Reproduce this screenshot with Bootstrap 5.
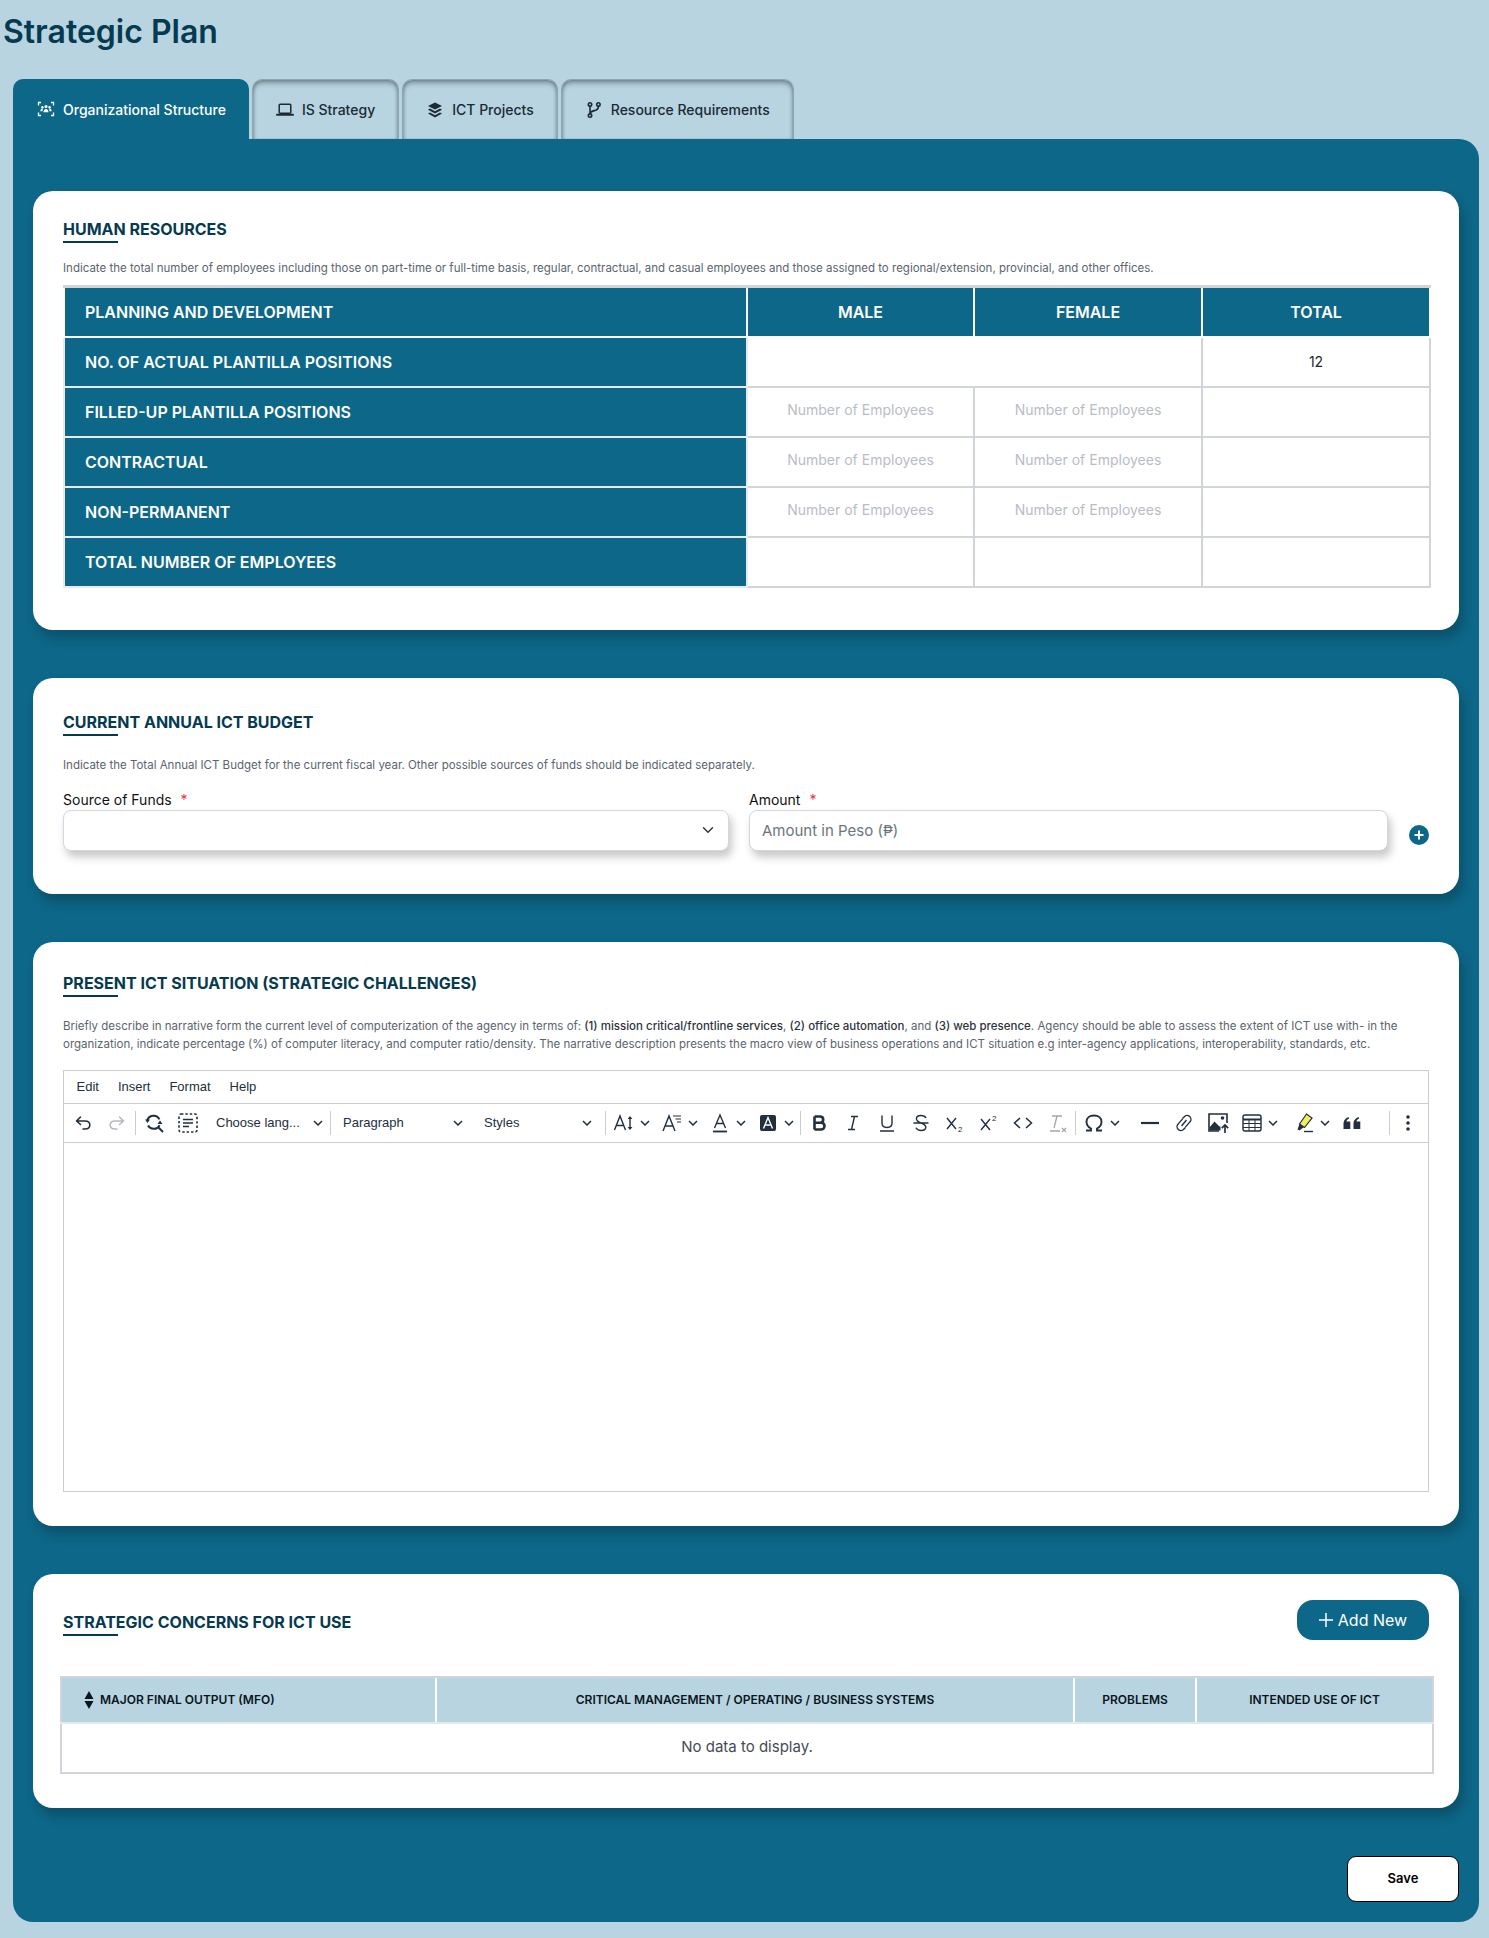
<!DOCTYPE html>
<html lang="en">
<head>
<meta charset="UTF-8">
<title>Strategic Plan</title>
<link href="https://cdn.jsdelivr.net/npm/bootstrap@5.3.0/dist/css/bootstrap.min.css" rel="stylesheet">
<style>
    body { background: #b7d4e0; font-family: Inter, "Liberation Sans", sans-serif; padding: 0 10px 19px 13px; color: #1d2733; }
    .page-title { font-size: 32px; line-height: 38px; font-weight: 600; color: #053a50; margin: 13px 0 28px -10px; }

    .plan-tabs { border-bottom: 0; gap: 3px; }
    .plan-tabs .nav-link { height: 60px; margin: 0; padding: 0 23px; display: flex; align-items: center; gap: 8px; font-size: 14px; font-weight: 500; color: #1b2a35; background: #b7d4e0; border: 1px solid #8fa5b0; border-bottom: 0; border-radius: 10px 10px 0 0; box-shadow: inset 0 4px 5px -1px rgba(40,50,60,.45), inset 2px 0 3px -1px rgba(40,50,60,.25), inset -2px 0 3px -1px rgba(40,50,60,.25); }
    .plan-tabs .nav-link.active { color: #fff; background: #0d6788; border: 0; box-shadow: none; padding: 0 23px 0 24px; }
    .tab-ico { width: 18px; height: 18px; flex-shrink: 0; }

    .plan-panel { background: #0d6788; border-radius: 0 20px 20px 20px; padding: 52px 20px 20px; }
    .plan-card { background: #fff; border-radius: 20px; padding: 28px 30px 42px; box-shadow: 4px 8px 12px rgba(0,0,0,.22); margin-bottom: 48px; }
    .sec-title { font-size: 16px; line-height: 20px; font-weight: 700; color: #053a50; margin: 0; }
    .sec-title::after { content: ""; display: block; width: 55px; height: 2px; margin-top: 2px; background: #053a50; }
    .sec-desc { font-size: 11.5px; line-height: 18px; color: #5b6470; margin: 16px 0 8px; }
    .sec-desc b { font-weight: 500; color: #2c3440; }

    .hr-table { table-layout: fixed; margin: 0; border: 2px solid #d2d4dc; border-top-width: 3px; }
    .hr-table td, .hr-table th { height: 50px; padding: 0; border: 2px solid #d2d4dc; vertical-align: middle; font-size: 16px; font-weight: 600; text-align: center; }
    .hr-table th { background: #0d6788; color: #fff; border-color: #e8eaee; }
    .hr-table thead th { border-color: #fff; }
    .hr-table th.row-head { text-align: left; padding-left: 20px; }
    .hr-table td { font-size: 14px; font-weight: 400; color: #1d2733; }
    .count-input { border: 0; background: transparent; box-shadow: none; text-align: center; font-size: 14px; padding: 0 4px 4px; }
    .count-input::placeholder { color: #b9bcc7; }

    .field-label { font-size: 14px; line-height: 20px; color: #111; margin: 0; display: block; }
    .field-label i { color: #e5343d; font-style: normal; margin-left: 5px; }
    .shadow-field { height: 41px; border: 1px solid #d4d6e0; border-radius: 8px; box-shadow: 3px 6px 8px rgba(0,0,0,.22); font-size: 15px; padding-left: 12px; }
    .shadow-field::placeholder { color: #6c757d; }
    .add-round { width: 20px; height: 20px; margin: 0 0 0 21px; padding: 0; border: 0; background: none; flex-shrink: 0; display: block; }

    .rich-editor { border: 1px solid #ccc; font-family: "Liberation Sans", Arial, sans-serif; font-size: 13px; color: #222f3e; }
    .ed-menu { height: 33px; padding-left: 3px; border-bottom: 1px solid #ccc; display: flex; align-items: center; }
    .ed-menu span { padding: 0 9.5px; }
    .ed-tools { height: 39px; padding-left: 2px; padding-right: 3px; border-bottom: 1px solid #ccc; display: flex; align-items: center; }
    .ed-tools > * { flex-shrink: 0; }
    .ed-btn { width: 34px; height: 26px; display: flex; align-items: center; justify-content: center; }
    .ed-btn svg { width: 24px; height: 24px; }
    .ed-chev { width: 14px; margin: 0 3px 0 -3px; display: flex; justify-content: center; }
    .ed-chev svg { width: 10px; height: 6px; }
    .ed-sep { width: 1px; height: 24px; background: #ccc; margin: 0 1px; }
    .ed-select { height: 26px; padding: 0 6px 0 11px; display: flex; align-items: center; justify-content: space-between; }
    .sel-lang { width: 124px; }
    .sel-para { width: 137px; margin-right: 4px; }
    .sel-style { width: 125px; margin-right: 6px; }
    .ed-body { height: 348px; }

    .add-new { background: #0d6788; color: #fff; border-radius: 16px; height: 40px; width: 132px; font-size: 16px; padding: 0; display: flex; align-items: center; justify-content: center; gap: 5px; }
    .add-new:hover { background: #0d6788; color: #fff; }
    .mfo-wrap { margin: 36px -3px 0; }
    .mfo-table { table-layout: fixed; margin: 0; border: 2px solid #d2d4dc; border-top: 0; }
    .mfo-table th { height: 46px; padding: 0; background: #b7d4e0; border: 0; border-top: 2px solid #d2d4dc; border-left: 2px solid #fff; border-bottom: 2px solid #e6e8ec; font-size: 12px; font-weight: 600; color: #0b1520; text-align: center; vertical-align: middle; }
    .mfo-table th:first-child { text-align: left; padding-left: 22px; border-left: 0; }
    .sort-ico { width: 10px; height: 18px; margin-right: 6px; vertical-align: -5px; }
    .mfo-table td { height: 50px; padding: 0; border: 0; text-align: center; vertical-align: middle; font-size: 15px; color: #444c56; }

    .save-btn { width: 112px; height: 46px; padding: 0; background: #fff; border: 1px solid #000; border-radius: 9px; font-size: 13px; font-weight: 600; color: #000; }
    .save-btn:hover { background: #fff; color: #000; }
</style>
</head>
<body>
    <h1 class="page-title">Strategic Plan</h1>

    <ul class="nav nav-tabs plan-tabs">
        <li class="nav-item">
            <a class="nav-link active" href="#">
                <svg class="tab-ico" viewBox="0 0 18 18" fill="none" stroke="currentColor" stroke-width="1.3"><path d="M4 2.5H1.5v3M14 2.5h2.5v3M4 15.5H1.5v-3M14 15.5h2.5v-3"/><g fill="currentColor" stroke="none"><circle cx="9" cy="6.6" r="1.5"/><circle cx="5.4" cy="7.2" r="1.2"/><circle cx="12.6" cy="7.2" r="1.2"/><path d="M6.5 12.2c0-2 1-3.3 2.5-3.3s2.5 1.3 2.5 3.3zM3.4 11.2c0-1.5.8-2.6 2-2.6.3 0 .5 0 .7.1-.4.6-.6 1.5-.6 2.5zM14.6 11.2c0-1.5-.8-2.6-2-2.6-.3 0-.5 0-.7.1.4.6.6 1.5.6 2.5z"/></g></svg>
                Organizational Structure
            </a>
        </li>
        <li class="nav-item">
            <a class="nav-link" href="#">
                <svg class="tab-ico" viewBox="0 0 18 18" fill="none" stroke="currentColor"><rect x="3.2" y="3.2" width="11.6" height="9" rx="1" stroke-width="1.5"/><path d="M1 13.8h16" stroke-width="2" stroke-linecap="round"/></svg>
                IS Strategy
            </a>
        </li>
        <li class="nav-item">
            <a class="nav-link" href="#">
                <svg class="tab-ico" viewBox="0 0 18 18" fill="currentColor"><path d="M9 1.5 16 5 9 8.5 2 5z"/><path d="M4 7.6 2 8.8l7 3.6 7-3.6-2-1.2-5 2.6z"/><path d="M4 11.4l-2 1.2 7 3.9 7-3.9-2-1.2-5 2.8z"/></svg>
                ICT Projects
            </a>
        </li>
        <li class="nav-item">
            <a class="nav-link" href="#">
                <svg class="tab-ico" viewBox="0 0 18 18" fill="none" stroke="currentColor" stroke-width="1.6"><circle cx="5" cy="3.4" r="1.7"/><circle cx="5" cy="14.6" r="1.7"/><circle cx="13.4" cy="3.4" r="1.7"/><path d="M5 5.2v7.6M13.4 5.2c0 3.2-2 4-4 4.4-2 .4-4 .8-4 3"/></svg>
                Resource Requirements
            </a>
        </li>
    </ul>

    <div class="plan-panel">
        <section class="plan-card">
            <h2 class="sec-title">HUMAN RESOURCES</h2>
            <p class="sec-desc">Indicate the total number of employees including those on part-time or full-time basis, regular, contractual, and casual employees and those assigned to regional/extension, provincial, and other offices.</p>
            <table class="table hr-table">
                <colgroup><col style="width:683px"><col style="width:227px"><col style="width:228px"><col style="width:228px"></colgroup>
                <thead>
                    <tr><th class="row-head">PLANNING AND DEVELOPMENT</th><th>MALE</th><th>FEMALE</th><th>TOTAL</th></tr>
                </thead>
                <tbody>
                    <tr><th class="row-head">NO. OF ACTUAL PLANTILLA POSITIONS</th><td colspan="2"></td><td>12</td></tr>
                    <tr><th class="row-head">FILLED-UP PLANTILLA POSITIONS</th><td><input class="form-control count-input" placeholder="Number of Employees"></td><td><input class="form-control count-input" placeholder="Number of Employees"></td><td></td></tr>
                    <tr><th class="row-head">CONTRACTUAL</th><td><input class="form-control count-input" placeholder="Number of Employees"></td><td><input class="form-control count-input" placeholder="Number of Employees"></td><td></td></tr>
                    <tr><th class="row-head">NON-PERMANENT</th><td><input class="form-control count-input" placeholder="Number of Employees"></td><td><input class="form-control count-input" placeholder="Number of Employees"></td><td></td></tr>
                    <tr><th class="row-head">TOTAL NUMBER OF EMPLOYEES</th><td></td><td></td><td></td></tr>
                </tbody>
            </table>
        </section>

        <section class="plan-card budget-card">
            <h2 class="sec-title">CURRENT ANNUAL ICT BUDGET</h2>
            <p class="sec-desc">Indicate the Total Annual ICT Budget for the current fiscal year. Other possible sources of funds should be indicated separately.</p>
            <div class="d-flex align-items-end budget-row">
                <div class="source-col">
                    <label class="field-label">Source of Funds <i>*</i></label>
                    <select class="form-select shadow-field"><option></option></select>
                </div>
                <div class="amount-col">
                    <label class="field-label">Amount <i>*</i></label>
                    <input class="form-control shadow-field" placeholder="Amount in Peso (₱)">
                </div>
                <button class="add-round" type="button" aria-label="Add source">
                    <svg viewBox="0 0 20 20" width="20" height="20"><circle cx="10" cy="10" r="10" fill="#0d6788"/><path d="M10 5.5v9M5.5 10h9" stroke="#fff" stroke-width="2"/></svg>
                </button>
            </div>
        </section>

        <section class="plan-card situation-card">
            <h2 class="sec-title">PRESENT ICT SITUATION (STRATEGIC CHALLENGES)</h2>
            <p class="sec-desc">Briefly describe in narrative form the current level of computerization of the agency in terms of: <b>(1) mission critical/frontline services</b>, <b>(2) office automation</b>, and <b>(3) web presence</b>. Agency should be able to assess the extent of ICT use with- in the organization, indicate percentage (%) of computer literacy, and computer ratio/density. The narrative description presents the macro view of business operations and ICT situation e.g inter-agency applications, interoperability, standards, etc.</p>
            <div class="rich-editor">
                <div class="ed-menu"><span>Edit</span><span>Insert</span><span>Format</span><span>Help</span></div>
                <div class="ed-tools">
                    <span class="ed-btn"><svg viewBox="0 0 24 24" fill="none" stroke="#222f3e" stroke-width="1.6" stroke-linecap="round" stroke-linejoin="round"><path d="M9.5 6 5.5 10l4 3.5M5.8 10H14c3 0 4.8 1.7 4.8 4s-1.8 4-4.8 4h-2"/></svg></span>
                    <span class="ed-btn"><svg viewBox="0 0 24 24" fill="none" stroke="#b5b9bf" stroke-width="1.6" stroke-linecap="round" stroke-linejoin="round"><path d="m14.5 6 4 4-4 3.5M18.2 10H10c-3 0-4.8 1.7-4.8 4s1.8 4 4.8 4h2"/></svg></span>
                    <span class="ed-sep"></span>
                    <span class="ed-btn"><svg viewBox="0 0 24 24" fill="none" stroke="#222f3e" stroke-width="2"><path d="M17.4 8.4A6.6 6.6 0 0 0 5.2 9.6M6 14.6a6.6 6.6 0 0 0 11.6-.4M16 16l5 5"/><path d="M3 8.4h5L5.5 12zM20.5 13h-5L18 9.4z" fill="#222f3e" stroke="none"/></svg></span>
                    <span class="ed-btn"><svg viewBox="0 0 24 24" fill="none" stroke="#222f3e"><rect x="3" y="3" width="18" height="18" rx="2" stroke-width="1.6" stroke-dasharray="2.4 2"/><path d="M7 8.5h10M7 12h10M7 15.5h6" stroke-width="1.5"/></svg></span>
                    <span class="ed-select sel-lang">Choose lang...<svg width="10" height="6" viewBox="0 0 10 6" fill="none" stroke="#222f3e" stroke-width="1.5"><path d="m1 1 4 4 4-4"/></svg></span>
                    <span class="ed-sep"></span>
                    <span class="ed-select sel-para">Paragraph<svg width="10" height="6" viewBox="0 0 10 6" fill="none" stroke="#222f3e" stroke-width="1.5"><path d="m1 1 4 4 4-4"/></svg></span>
                    <span class="ed-select sel-style">Styles<svg width="10" height="6" viewBox="0 0 10 6" fill="none" stroke="#222f3e" stroke-width="1.5"><path d="m1 1 4 4 4-4"/></svg></span>
                    <span class="ed-sep"></span>
                    <span class="ed-btn"><svg viewBox="0 0 24 24" fill="none" stroke="#222f3e"><path d="m2.5 19 5.5-14 5.5 14M4.5 14.5h7" stroke-width="1.4"/><path d="M18 6v12" stroke-width="1.4"/><path d="m15.6 8 2.4-3 2.4 3zM15.6 16l2.4 3 2.4-3z" fill="#222f3e" stroke="none"/></svg></span>
                    <span class="ed-chev"><svg viewBox="0 0 10 6" fill="none" stroke="#222f3e" stroke-width="1.5"><path d="m1 1 4 4 4-4"/></svg></span>
                    <span class="ed-btn"><svg viewBox="0 0 24 24" fill="none" stroke="#222f3e" stroke-width="1.4"><path d="m3 20 6-15 6 15M5 15h8"/><path d="M13 5h8M15.5 8h5.5M17 11h4" stroke-width="1.2"/></svg></span>
                    <span class="ed-chev"><svg viewBox="0 0 10 6" fill="none" stroke="#222f3e" stroke-width="1.5"><path d="m1 1 4 4 4-4"/></svg></span>
                    <span class="ed-btn"><svg viewBox="0 0 24 24" fill="none" stroke="#222f3e" stroke-width="1.4"><path d="m6.5 17 5.5-13 5.5 13M8.5 12.5h7"/><path d="M5 20.5h14" stroke-width="1.8"/></svg></span>
                    <span class="ed-chev"><svg viewBox="0 0 10 6" fill="none" stroke="#222f3e" stroke-width="1.5"><path d="m1 1 4 4 4-4"/></svg></span>
                    <span class="ed-btn"><svg viewBox="0 0 24 24"><rect x="4" y="4" width="16" height="16" rx="2" fill="#222f3e"/><path d="m7.5 17.5 4.5-11 4.5 11M9 14h6" fill="none" stroke="#fff" stroke-width="1.4"/></svg></span>
                    <span class="ed-chev"><svg viewBox="0 0 10 6" fill="none" stroke="#222f3e" stroke-width="1.5"><path d="m1 1 4 4 4-4"/></svg></span>
                    <span class="ed-sep"></span>
                    <span class="ed-btn"><svg viewBox="0 0 24 24" fill="none" stroke="#222f3e" stroke-width="2.6"><path d="M7.5 5.5v13M7.5 5.5H13c2 0 3.2 1.3 3.2 3s-1.2 3.2-3.2 3.2H7.5M7.5 11.7H14c2 0 3.5 1.3 3.5 3.3s-1.5 3.5-3.5 3.5H7.5"/></svg></span>
                    <span class="ed-btn"><svg viewBox="0 0 24 24" fill="none" stroke="#222f3e" stroke-width="1.4"><path d="M10 5.5h7M7 18.5h7M13.5 5.5l-3 13"/></svg></span>
                    <span class="ed-btn"><svg viewBox="0 0 24 24" fill="none" stroke="#222f3e" stroke-width="1.4"><path d="M7 4.5v7.5c0 3 2 4.5 5 4.5s5-1.5 5-4.5V4.5M5 20h14"/></svg></span>
                    <span class="ed-btn"><svg viewBox="0 0 24 24" fill="none" stroke="#222f3e" stroke-width="1.4"><path d="M17 7c-.8-1.6-2.6-2.5-5-2.5-2.8 0-4.6 1.3-4.6 3.3 0 2 1.6 3 4.6 4.2 3 1.2 4.8 2 4.8 4 0 2-2 3.5-4.8 3.5-2.4 0-4.2-1-5-2.7M4.5 12h15"/></svg></span>
                    <span class="ed-btn"><svg viewBox="0 0 24 24" fill="none" stroke="#222f3e" stroke-width="1.4"><path d="m4 7 9 11M13 7l-9 11"/><text x="15" y="21" font-size="8" fill="#222f3e" stroke="none">2</text></svg></span>
                    <span class="ed-btn"><svg viewBox="0 0 24 24" fill="none" stroke="#222f3e" stroke-width="1.4"><path d="m4 8 9 11M13 8l-9 11"/><text x="15" y="10" font-size="8" fill="#222f3e" stroke="none">2</text></svg></span>
                    <span class="ed-btn"><svg viewBox="0 0 24 24" fill="none" stroke="#222f3e" stroke-width="1.5"><path d="m9 7-5.5 5L9 17M15 7l5.500 5L15 17"/></svg></span>
                    <span class="ed-btn"><svg viewBox="0 0 24 24" fill="none" stroke="#a3a8af" stroke-width="1.3"><path d="M7 5h10M12 5 9 17M5 20h10M17 17l4 4M21 17l-4 4"/></svg></span>
                    <span class="ed-sep"></span>
                    <span class="ed-btn"><svg viewBox="0 0 24 24" fill="none" stroke="#222f3e" stroke-width="1.9"><path d="M4 19.500h5v-2c-3-1.500-4.500-4-4.500-6.800C4.500 7 7.500 4.500 12 4.500s7.500 2.500 7.500 6.200c0 2.800-1.500 5.300-4.500 6.800v2h5"/></svg></span>
                    <span class="ed-chev"><svg viewBox="0 0 10 6" fill="none" stroke="#222f3e" stroke-width="1.5"><path d="m1 1 4 4 4-4"/></svg></span>
                    <span class="ed-btn ms-2"><svg viewBox="0 0 24 24"><path d="M3 12h18" stroke="#222f3e" stroke-width="2.2"/></svg></span>
                    <span class="ed-btn"><svg viewBox="0 0 24 24" fill="none" stroke="#222f3e" stroke-width="1.4"><path d="m10.500 7.500 1.800-1.800a3.700 3.700 0 0 1 5.600 5.200l-4.500 5.200M13.500 16.500l-1.800 1.800a3.700 3.700 0 0 1-5.600-5.200l4.500-5.200"/><path d="m9.500 15 5-6"/></svg></span>
                    <span class="ed-btn"><svg viewBox="0 0 24 24" fill="none"><path d="M21 12V3H3v17h10" stroke="#222f3e" stroke-width="1.6"/><circle cx="16.500" cy="7" r="1.800" fill="#222f3e"/><path d="M3.500 19.500v-3l5-6 5 5h1v4z" fill="#222f3e"/><path d="M19 22v-8M15.800 17.200 19 14l3.200 3.200" stroke="#222f3e" stroke-width="1.700"/></svg></span>
                    <span class="ed-btn"><svg viewBox="0 0 24 24" fill="none" stroke="#222f3e"><rect x="3" y="4" width="18" height="16" rx="2" stroke-width="1.400"/><path d="M3 8.500h18" stroke-width="2"/><path d="M3 12.500h18M3 16.500h18M9 8v12M15 8v12" stroke-width="1"/></svg></span>
                    <span class="ed-chev"><svg viewBox="0 0 10 6" fill="none" stroke="#222f3e" stroke-width="1.5"><path d="m1 1 4 4 4-4"/></svg></span>
                    <span class="ed-btn ms-1"><svg viewBox="0 0 24 24"><path d="M14.500 3 20 7l-7.500 9.500-5-3.500z" fill="#f5ee5c" stroke="#222f3e" stroke-width="1.200"/><path d="m7.500 13-2 5.500 2 1 4.500-3.500z" fill="#222f3e"/><path d="M12 20.500h9" stroke="#222f3e" stroke-width="1.400"/></svg></span>
                    <span class="ed-chev"><svg viewBox="0 0 10 6" fill="none" stroke="#222f3e" stroke-width="1.5"><path d="m1 1 4 4 4-4"/></svg></span>
                    <span class="ed-btn"><svg viewBox="0 0 24 24" fill="#222f3e"><path d="M3.500 18v-5.500c0-3 1.500-5 5-6.500l.7 1.600c-1.600.8-2.500 1.700-2.700 3h3.800V18zM13.500 18v-5.500c0-3 1.500-5 5-6.500l.7 1.600c-1.600.8-2.500 1.700-2.700 3h3.800V18z"/></svg></span>
                    <span class="ms-auto d-flex align-items-center">
                        <span class="ed-sep"></span>
                        <span class="ed-btn"><svg viewBox="0 0 24 24" fill="#222f3e"><circle cx="12" cy="6" r="1.800"/><circle cx="12" cy="12" r="1.800"/><circle cx="12" cy="18" r="1.800"/></svg></span>
                    </span>
                </div>
                <div class="ed-body"></div>
            </div>
        </section>

        <section class="plan-card concerns-card">
            <div class="d-flex justify-content-between align-items-start">
                <h2 class="sec-title concerns-title">STRATEGIC CONCERNS FOR ICT USE</h2>
                <button class="btn add-new" type="button">
                    <svg width="14" height="14" viewBox="0 0 14 14"><path d="M7 0v14M0 7h14" stroke="#fff" stroke-width="1.500"/></svg>
                    Add New
                </button>
            </div>
            <div class="mfo-wrap">
                <table class="table mfo-table">
                    <colgroup><col style="width:375px"><col style="width:638px"><col style="width:122px"><col style="width:237px"></colgroup>
                    <thead>
                        <tr>
                            <th><svg class="sort-ico" viewBox="0 0 10 18" fill="#0b1520"><path d="M5 0l4.500 8h-9zM5 18 .5 10h9z"/></svg>MAJOR FINAL OUTPUT (MFO)</th>
                            <th>CRITICAL MANAGEMENT / OPERATING / BUSINESS SYSTEMS</th>
                            <th>PROBLEMS</th>
                            <th>INTENDED USE OF ICT</th>
                        </tr>
                    </thead>
                    <tbody><tr><td colspan="4">No data to display.</td></tr></tbody>
                </table>
            </div>
        </section>

        <div class="d-flex justify-content-end">
            <button class="btn save-btn" type="button">Save</button>
        </div>
    </div>

    <style>
        .budget-card { padding: 34px 30px 43px; }
        .budget-card .sec-desc { margin: 20px 0 16px; }
        .budget-row .source-col { width: 666px; }
        .budget-row .amount-col { width: 639px; margin-left: 20px; }
        .budget-row .add-round { margin-bottom: 9px; }
        .situation-card { padding: 31px 30px 34px; }
        .situation-card .sec-desc { margin: 20px 0 17px; }
        .concerns-card { padding: 26px 30px 34px; }
        .concerns-title { margin-top: 12px; }
        .plan-panel > .concerns-card { margin-bottom: 48px; }
    </style>
</body>
</html>
